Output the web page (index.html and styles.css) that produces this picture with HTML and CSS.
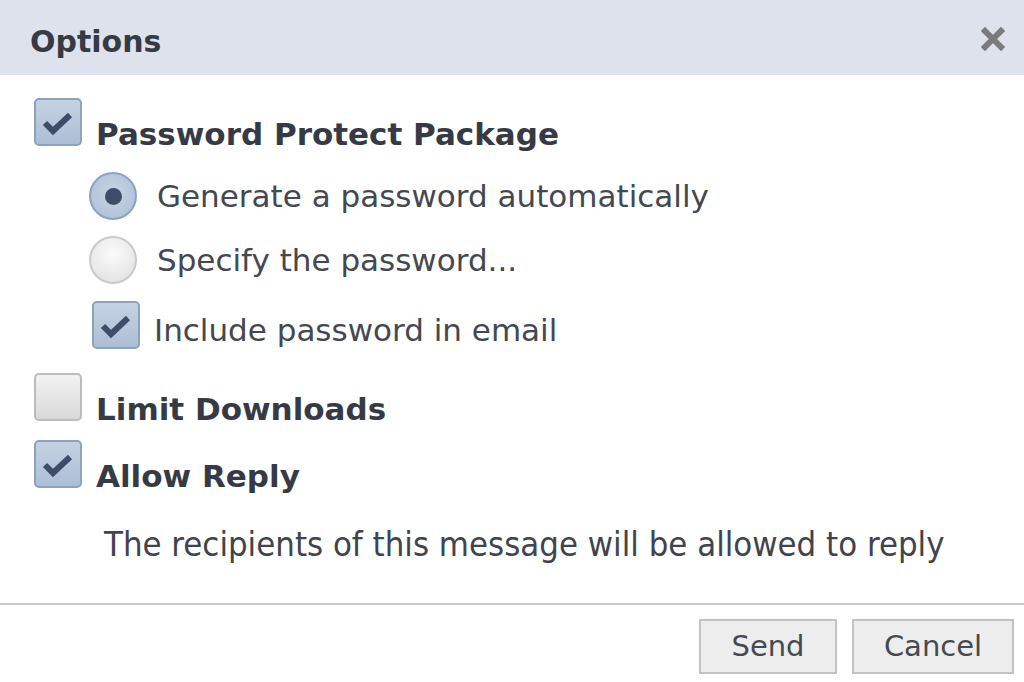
FILE: index.html
```html
<!DOCTYPE html>
<html>
<head>
<meta charset="utf-8">
<link rel="stylesheet" href="styles.css">
</head>
<body>
<div class="dialog">
  <div class="header">
    <span class="title">Options</span>
    <svg class="close" width="24" height="24" viewBox="0 0 24 24"><path d="M4 4 L20 20 M20 4 L4 20" stroke="#7b7b7b" stroke-width="6" stroke-linecap="square"/></svg>
  </div>
  <div class="content">
    <div class="opt">
      <span class="box checked"><svg width="48" height="48" viewBox="0 0 48 48"><path d="M11 25 L19 33 L36 17" fill="none" stroke="#3e4c69" stroke-width="6"/></svg></span>
      <span class="opt-label">Password Protect Package</span>
    </div>
    <div class="sub">
      <div class="radio-row">
        <span class="radio on"><span class="dot"></span></span>
        <span class="radio-label">Generate a password automatically</span>
      </div>
      <div class="radio-row second">
        <span class="radio"></span>
        <span class="radio-label">Specify the password...</span>
      </div>
      <div class="check-row">
        <span class="box checked"><svg width="48" height="48" viewBox="0 0 48 48"><path d="M11 25 L19 33 L36 17" fill="none" stroke="#3e4c69" stroke-width="6"/></svg></span>
        <span class="check-label">Include password in email</span>
      </div>
    </div>
    <div class="opt limit">
      <span class="box"></span>
      <span class="opt-label">Limit Downloads</span>
    </div>
    <div class="opt allow">
      <span class="box checked"><svg width="48" height="48" viewBox="0 0 48 48"><path d="M11 25 L19 33 L36 17" fill="none" stroke="#3e4c69" stroke-width="6"/></svg></span>
      <span class="opt-label">Allow Reply</span>
    </div>
    <p class="desc">The recipients of this message will be allowed to reply</p>
  </div>
  <div class="divider"></div>
  <div class="footer">
    <button class="btn send">Send</button>
    <button class="btn cancel">Cancel</button>
  </div>
</div>
</body>
</html>
```
FILE: styles.css
```css
html, body {
  margin: 0;
  padding: 0;
  background: #ffffff;
}
.dialog {
  width: 1024px;
  height: 682px;
  font-family: "DejaVu Sans", sans-serif;
  color: #3f3f3f;
  overflow: hidden;
}
.header {
  height: 75px;
  box-sizing: border-box;
  background: #dde2ec;
  display: flex;
  justify-content: space-between;
  align-items: flex-start;
  padding: 24px 19px 0 30px;
}
.title {
  font-weight: bold;
  font-size: 30px;
  line-height: 36px;
  color: #363a44;
}
.close {
  margin-top: 3px;
}
.content {
  padding-left: 34px;
}
.opt {
  display: flex;
  align-items: flex-start;
  margin-top: 23px;
}
.opt.limit {
  margin-top: 24px;
}
.opt.allow {
  margin-top: 13px;
}
.box {
  width: 48px;
  height: 48px;
  flex: none;
  box-sizing: border-box;
  border: 2px solid #bcbcbc;
  border-radius: 5px;
  background: linear-gradient(#f2f2f2, #d9d9d9);
  display: block;
}
.box svg {
  display: block;
  margin: -2px;
}
.box.checked {
  border-color: #8fa2bd;
  background: linear-gradient(#c5d2e3, #acbed6);
}
.opt-label {
  margin-left: 14px;
  margin-top: 18px;
  font-weight: bold;
  font-size: 31px;
  line-height: 36px;
  color: #363a44;
}
.sub {
  margin-top: 20px;
  padding-left: 55px;
}
.radio-row {
  display: flex;
  align-items: center;
  height: 48px;
}
.radio-row.second {
  margin-top: 16px;
}
.radio {
  width: 48px;
  height: 48px;
  box-sizing: border-box;
  border-radius: 50%;
  border: 2px solid #cacaca;
  background: radial-gradient(circle at 50% 35%, #fbfbfb, #dedede);
  flex: none;
  display: flex;
  align-items: center;
  justify-content: center;
}
.radio.on {
  border-color: #8fa2bd;
  background: radial-gradient(circle at 50% 45%, #c9d5e5, #aabdd5);
}
.dot {
  width: 17px;
  height: 17px;
  border-radius: 50%;
  background: #3e4c69;
}
.radio-label {
  margin-left: 20px;
  font-size: 31px;
  line-height: 48px;
  color: #444850;
}
.check-row {
  display: flex;
  align-items: flex-start;
  margin-top: 17px;
  margin-left: 3px;
}
.check-label {
  margin-left: 14px;
  margin-top: 10px;
  font-size: 31px;
  line-height: 38px;
  color: #444850;
}
.desc {
  margin: 30px 0 0 70px;
  font-family: "DejaVu Sans Condensed", "DejaVu Sans", sans-serif;
  font-stretch: condensed;
  font-size: 34.4px;
  line-height: 40px;
  color: #40444c;
}
.divider {
  margin-top: 39px;
  height: 2px;
  background: #c8c8c8;
}
.footer {
  display: flex;
  justify-content: flex-end;
  gap: 15px;
  padding: 14px 10px 0 0;
}
.btn {
  height: 55px;
  box-sizing: border-box;
  border: 2px solid #c2c2c2;
  background: #ededed;
  font-family: "DejaVu Sans", sans-serif;
  font-size: 29px;
  line-height: 40px;
  color: #454950;
  padding: 0 0 2px;
  border-radius: 0;
}
.btn.send {
  width: 138px;
}
.btn.cancel {
  width: 162px;
}
```
